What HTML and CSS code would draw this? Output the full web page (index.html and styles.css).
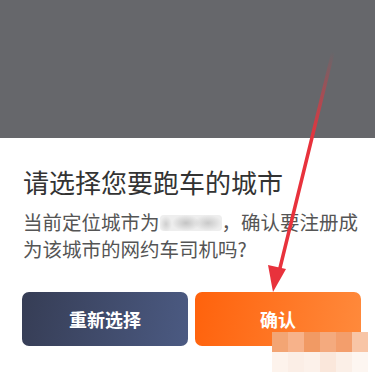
FILE: index.html
```html
<!DOCTYPE html>
<html>
<head>
<meta charset="utf-8">
<link rel="stylesheet" href="styles.css">
</head>
<body>
<div class="page">
  <div class="mask"></div>
  <div class="sheet">
    <h1 class="title">请选择您要跑车的城市</h1>
    <p class="desc"><span class="line">当前定位城市为<span class="blur"></span>，确认要注册成</span><span class="line">为该城市的网约车司机吗?</span></p>
    <div class="actions">
      <button class="btn btn-reset">重新选择</button>
      <button class="btn btn-ok">确认</button>
    </div>
  </div>
  <svg class="arrow" width="375" height="372" viewBox="0 0 375 372">
    <defs>
      <linearGradient id="fade" x1="333" y1="52" x2="312" y2="140" gradientUnits="userSpaceOnUse">
        <stop offset="0" stop-color="#e8323c" stop-opacity="0"/>
        <stop offset="1" stop-color="#e8323c" stop-opacity="1"/>
      </linearGradient>
    </defs>
    <path d="M333 52 L279 272" stroke="url(#fade)" stroke-width="3.5" stroke-linecap="round" fill="none"/>
    <path d="M273 292 L268 265 L286 269 Z" fill="#e8323c"/>
  </svg>
  <div class="mosaic">
    <span class="m1"></span><span class="m2"></span><span class="m3"></span><span class="m4"></span><span class="m5"></span><span class="m6"></span>
    <span class="m7"></span><span class="m8"></span><span class="m9"></span><span class="m10"></span><span class="m11"></span><span class="m12"></span>
  </div>
</div>
</body>
</html>
```
FILE: styles.css
```css
* { box-sizing: border-box; }
html, body { margin: 0; padding: 0; background: #fff; }
.page {
  position: relative;
  width: 375px;
  height: 372px;
  overflow: hidden;
  font-family: "Noto Sans CJK SC", "Noto Sans", sans-serif;
}
.mask { height: 138px; background: #66676b; }
.sheet { padding: 0 14px 0 23px; }
.title {
  margin: 26px 0 0;
  font-size: 26px;
  line-height: 36px;
  font-weight: 400;
  color: #333;
}
.desc {
  margin: 8px 0 0;
  font-size: 19.5px;
  line-height: 27px;
  color: #555;
}
.line { display: block; white-space: nowrap; }
.blur {
  display: inline-block;
  width: 62px;
  height: 16px;
  vertical-align: -1px;
  background:
    radial-gradient(ellipse 6px 8px at 6px 9px, #cfcfcf, rgba(255,255,255,0)),
    radial-gradient(ellipse 14px 8px at 26px 8px, #c4c4c4, rgba(255,255,255,0)),
    radial-gradient(ellipse 14px 8px at 48px 8px, #c9c9c9, rgba(255,255,255,0)),
    linear-gradient(#eeeeee, #eeeeee);
  border-radius: 4px;
}
.actions {
  display: flex;
  gap: 7px;
  margin-top: 30px;
  margin-left: -1px;
}
.btn {
  flex: 0 0 166px;
  height: 54px;
  border: 0;
  border-radius: 7px;
  color: #fff;
  font-family: inherit;
  font-size: 18px;
  font-weight: 700;
}
.btn-reset { background: linear-gradient(100deg, #363d55, #4b5a82); }
.btn-ok { background: linear-gradient(100deg, #ff620c, #ff8a3c); }
.arrow { position: absolute; left: 0; top: 0; pointer-events: none; }
.mosaic {
  position: absolute;
  left: 272px;
  top: 332px;
  width: 96px;
  height: 40px;
  display: grid;
  grid-template-columns: repeat(6, 16px);
  grid-template-rows: repeat(2, 20px);
}
.mosaic span { display: block; }
.m1 { background: #f3a574; }
.m2 { background: #f7b28a; }
.m3 { background: #f19a64; }
.m4 { background: #f4aa7e; }
.m5 { background: #f39e6c; }
.m6 { background: #f8c5a6; }
.m7 { background: #fdf3ec; }
.m8 { background: #fbeee6; }
.m9 { background: #fcf1ea; }
.m10 { background: #fae7db; }
.m11 { background: #fbefe7; }
.m12 { background: #fdf6f1; }
```
